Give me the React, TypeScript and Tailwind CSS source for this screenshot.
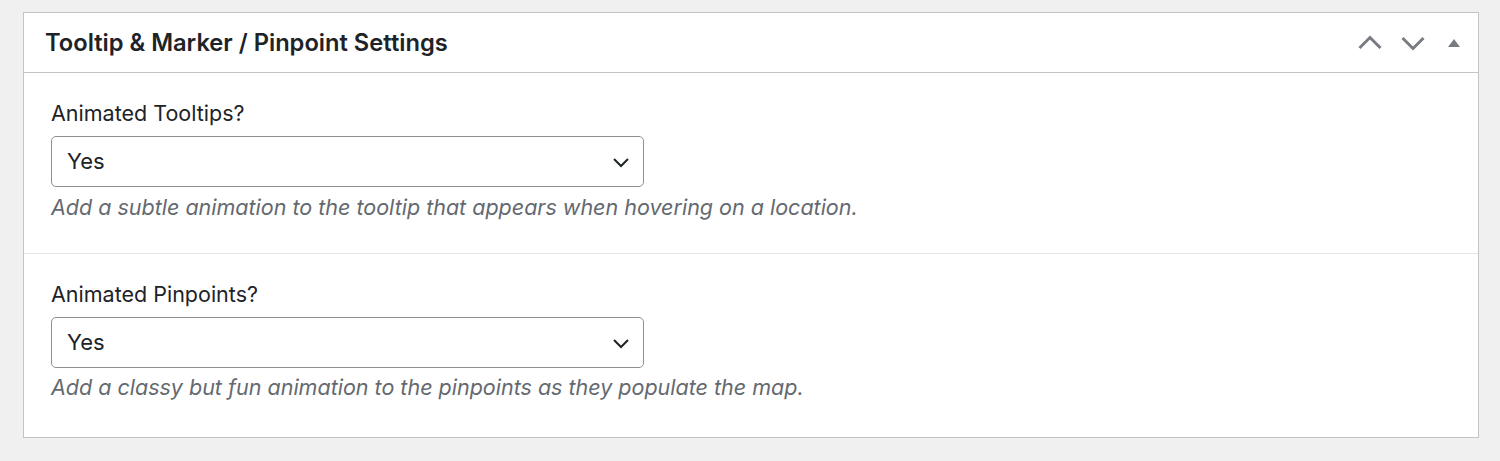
import React from "react";

const Chevron = ({ dir, className }: { dir: "up" | "down"; className?: string }) => (
  <svg viewBox="0 0 24 24" className={className} fill="none" stroke="currentColor" strokeWidth={3} strokeLinecap="butt" strokeLinejoin="miter">
    {dir === "up" ? <path d="M1.5 17 L12 6.5 L22.5 17" /> : <path d="M1.5 7 L12 17.5 L22.5 7" />}
  </svg>
);

const Field = ({ label, desc, descMt }: { label: string; desc: string; descMt: string }) => (
  <div className="px-[27px] pt-[27px]">
    <div className="text-[21.5px] leading-[27px] text-[#1d2327]">{label}</div>
    <div className="mt-[9px] w-[593px] h-[51px] rounded-[5px] border border-[#8c8f94] bg-white flex items-center justify-between pl-[15px] pr-[12px]">
      <span className="text-[22px] text-[#1d2327]">Yes</span>
      <svg viewBox="0 0 20 20" className="w-[20px] h-[20px] text-[#1d2327]" fill="none" stroke="currentColor" strokeWidth={2}>
        <path d="M3 7 L10 14 L17 7" />
      </svg>
    </div>
    <div className={`${descMt} text-[21.5px] leading-[28px] italic text-[#646970]`}>{desc}</div>
  </div>
);

export default function App() {
  return (
    <div className="w-[1500px] h-[461px] bg-[#f0f0f1] pt-[12px] pl-[23px]" style={{ fontFamily: "Inter, 'Noto Sans', sans-serif" }}>
      <div className="w-[1456px] h-[426px] bg-white border border-[#c3c4c7] flex flex-col">
        <div className="h-[60px] border-b border-[#c3c4c7] flex items-center justify-between pl-[21px] pr-[14px] shrink-0">
          <h2 className="text-[23.7px] font-semibold text-[#1d2327]">Tooltip &amp; Marker / Pinpoint Settings</h2>
          <div className="flex items-center gap-[19px] text-[#787c82]">
            <Chevron dir="up" className="w-[24px] h-[24px]" />
            <Chevron dir="down" className="w-[24px] h-[24px]" />
            <svg viewBox="0 0 20 20" className="w-[20px] h-[20px]" fill="currentColor">
              <path d="M4 14 L10 6 L16 14 Z" />
            </svg>
          </div>
        </div>
        <div className="h-[180px] shrink-0">
          <Field label="Animated Tooltips?" desc="Add a subtle animation to the tooltip that appears when hovering on a location." descMt="mt-[6px]" />
        </div>
        <div className="border-t border-[#e4e4e6]" />
        <Field label="Animated Pinpoints?" desc="Add a classy but fun animation to the pinpoints as they populate the map." descMt="mt-[5px]" />
      </div>
    </div>
  );
}
